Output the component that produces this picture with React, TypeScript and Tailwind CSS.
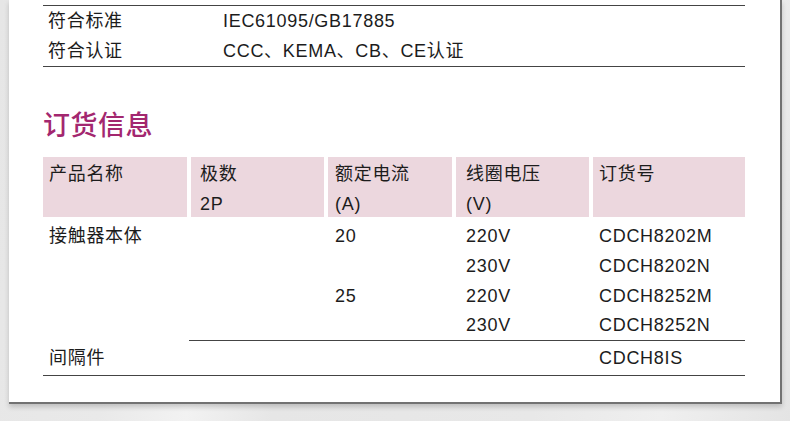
const font = { fontFamily: '"Liberation Sans", "Noto Sans CJK SC", sans-serif' };

const cols = "grid grid-cols-[144px_133px_124px_133px_152px] gap-x-[4px]";
const pads = ["pl-[6px]", "pl-[9px]", "pl-[7px]", "pl-[10px]", "pl-[6px]"];

const specs = [
  ["符合标准", "IEC61095/GB17885"],
  ["符合认证", "CCC、KEMA、CB、CE认证"],
];

const header = [
  ["产品名称", ""],
  ["极数", "2P"],
  ["额定电流", "(A)"],
  ["线圈电压", "(V)"],
  ["订货号", ""],
];

const rows = [
  ["接触器本体", "", "20", "220V", "CDCH8202M"],
  ["", "", "", "230V", "CDCH8202N"],
  ["", "", "25", "220V", "CDCH8252M"],
  ["", "", "", "230V", "CDCH8252N"],
];

function Row({ cells, height }: { cells: string[]; height: string }) {
  return (
    <div className={`${cols} ${height} items-center`}>
      {cells.map((c, i) => (
        <span className={pads[i]} key={i}>
          {c}
        </span>
      ))}
    </div>
  );
}

export default function App() {
  return (
    <div
      className="flex h-[421px] w-[790px] overflow-hidden bg-[linear-gradient(100deg,#e6e6e6_0%,#e9e9e9_20%,#f2f2f2_30%,#e6e6e6_40%,#e8e8e8_70%,#efefef_85%,#e4e4e4_100%)] text-[18px] tracking-[0.7px] text-[#1c1c1c]"
      style={font}
    >
      <div className="ml-[9px] h-[404px] w-[773px] border-r-2 border-b-2 border-[#727272] bg-white pl-[34px] shadow-[0_3px_5px_rgba(0,0,0,0.18)]">
        <div className="w-[702px]">
          {/* spec rows */}
          <div className="mt-[5px] border-y border-[#444]">
            {specs.map(([label, value]) => (
              <div className="flex h-[30px] items-center" key={label}>
                <span className="w-[180px] pl-[5px]">{label}</span>
                <span>{value}</span>
              </div>
            ))}
          </div>

          <h2 className="pt-[44px] pb-[16px] text-[27px] leading-[30px] font-medium tracking-[0.5px] text-[#a3276f]">
            订货信息
          </h2>

          {/* order table */}
          <div className={cols}>
            {header.map(([a, b], i) => (
              <div className={`h-[60px] bg-[#ecd7de] pt-[2px] leading-[30px] ${pads[i]}`} key={a}>
                <div>{a}</div>
                <div>{b}</div>
              </div>
            ))}
          </div>

          <div className="pt-[4px]">
            {rows.map((r, i) => (
              <Row cells={r} height={i === 3 ? "h-[29px]" : "h-[30px]"} key={i} />
            ))}
            <div className="ml-[146px] h-px bg-[#444]" />
            <Row cells={["间隔件", "", "", "", "CDCH8IS"]} height="h-[34px]" />
            <div className="h-px bg-[#444]" />
          </div>
        </div>
      </div>
    </div>
  );
}
